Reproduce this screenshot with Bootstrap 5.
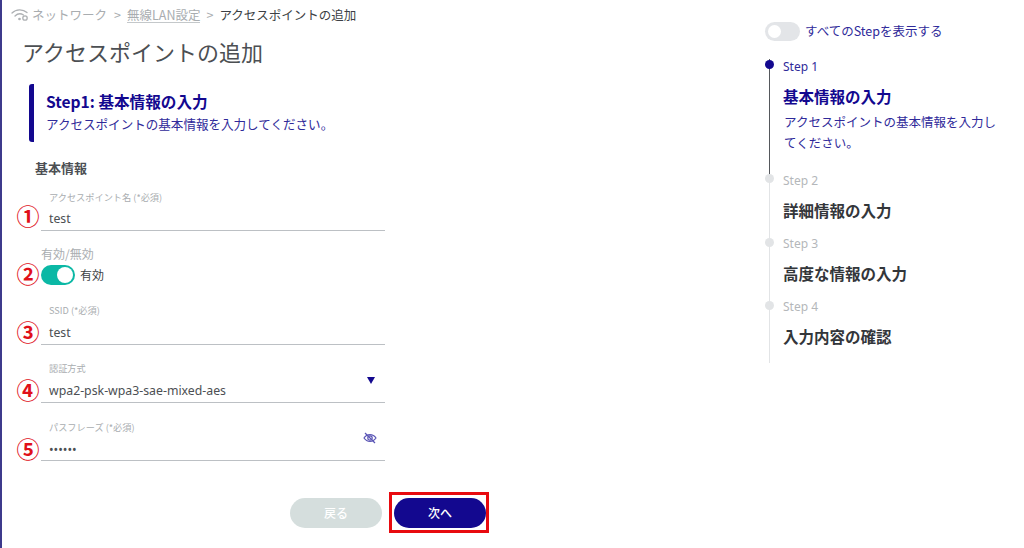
<!DOCTYPE html>
<html lang="ja">
<head>
<meta charset="utf-8">
<title>アクセスポイントの追加</title>
<link href="https://cdn.jsdelivr.net/npm/bootstrap@5.3.0/dist/css/bootstrap.min.css" rel="stylesheet">
<style>
html,body{height:100%}
body{font-family:"Noto Sans CJK JP","Noto Sans",sans-serif;color:#3c3f44;background:#fff;overflow:hidden}
.page-shell{height:548px;border-left:2px solid #3d3a8c;position:relative}
.main-col{width:763px;flex:none}
.crumbs{height:30px;padding-left:9px;font-size:12.5px;color:#a9adb0;gap:6px}
.crumbs svg{margin-right:-3px}
.crumb-first{margin-right:1px}
.crumb-link{border-bottom:1px solid #c4c8ca;line-height:15px}
.crumb-here{color:#3c3f44}
.page-heading{font-size:22px;font-weight:400;color:#4c4f53;margin:6px 0 0 20px;line-height:30px}
.step-banner{margin:18px 0 0 27px;border-left:5px solid #13088f;border-radius:3px;height:58px;padding:0 0 1px 12px}
.step-banner h2{font-size:15.6px;font-weight:700;color:#13088f;margin:0 0 1px;line-height:22px}
.step-banner p{font-size:12.55px;color:#2f2a9a;margin:0;line-height:22px}
.sec-title{font-size:13px;font-weight:700;color:#4c4f53;margin:16px 0 0 33px;line-height:20px}
.field-row{position:relative;margin-left:39px;width:344px;border-bottom:1px solid #bcc0c4}
.fld-name{margin-top:13px}
.fld-ssid{margin-top:18px}
.fld-auth{margin-top:17px}
.fld-pass{margin-top:18px}
.fld-label{font-size:9.2px;color:#a9adb0;line-height:12px;padding-left:8px}
.fld-value{font-size:12.3px;color:#4c4f53;padding:7px 0 1px 8px;line-height:20px;font-family:"Noto Sans","Noto Sans CJK JP",sans-serif}
.fld-name .fld-value{padding-top:6px}
.fld-pass .fld-value{padding-bottom:0}
.mark-num{position:absolute;left:-26px;width:26px;height:26px;color:#e0101a;font-size:23px;line-height:26px;text-align:center;font-weight:700}
.fld-name .mark-num{top:11px}
.fld-ssid .mark-num,.fld-auth .mark-num,.fld-pass .mark-num{top:14px}
.toggle-label{font-size:12px;color:#a9adb0;margin:14px 0 0 39px;line-height:18px}
.toggle-row{margin:1px 0 0 39px;position:relative;height:22px;gap:5px;font-size:12px;color:#3c3f44}
.toggle-row .mark-num{top:-4px}
.switch-on{width:34px;height:20px;border-radius:10px;background:#0bb8a5;position:relative}
.switch-on::after{content:"";position:absolute;right:2px;top:2px;width:16px;height:16px;border-radius:50%;background:#fff}
.switch-off{width:35px;height:19px;border-radius:10px;background:#e3e5e8;position:relative}
.switch-off::after{content:"";position:absolute;left:3px;top:3px;width:13px;height:13px;border-radius:50%;background:#fff}
.field-ico{position:absolute}
.ico-caret{top:15px;right:10px}
.ico-eye{top:11px;right:8px}
.btn-back,.btn-next{width:92px;height:30px;border-radius:15px;border:0;font-size:12px;padding:0;font-weight:500}
.btn-back,.btn-back:disabled{background:#d5dedd;color:#fff;opacity:1}
.btn-next,.btn-next:hover{background:#13088f;color:#fff}
.next-frame{border:3px solid #e80a0f;padding:3px 0 2px 2px;width:100px;height:41px;margin-left:7px}
.foot-row{margin-left:288px;margin-top:31px}
.side-col{width:259px;flex:none}
.side-toggle{margin:21px 0 0 0;gap:5px;font-size:12.5px;color:#2f2a9a;height:21px}
.stepper{margin-top:17px;margin-left:4px;position:relative;border-left:1px solid #e2e4e6;height:304px;padding-left:13px}
.stepper-progress{position:absolute;left:-1px;top:0;width:1px;height:118px;background:#55585c}
.step-dot{position:absolute;left:-5px;width:9px;height:9px;border-radius:50%;background:#e2e4e6}
.step-dot.on{background:#13088f}
.dot-a{top:1px}.dot-b{top:115px}.dot-c{top:179px}.dot-d{top:242px}
.step-unit{height:63px}
.step-unit.open{height:114px}
.step-no{font-size:12px;color:#b4b7ba;line-height:16px;font-family:"Noto Sans",sans-serif}
.step-name{font-size:15.5px;font-weight:700;color:#33363a;line-height:20px;margin-top:11px}
.open .step-no{color:#2f2a9a}
.open .step-name{color:#13088f}
.step-text{font-size:12.5px;color:#2f2a9a;line-height:21px;margin:5px 0 0 1px;width:218px}
</style>
</head>
<body>
<div class="page-shell d-flex">
  <div class="main-col">
    <div class="crumbs d-flex align-items-center">
      <svg width="18" height="14" viewBox="0 0 18 14" fill="none" stroke="#aeb1b4" stroke-width="1.3" stroke-linecap="round"><path d="M1 5C5 .8 12 .8 16 4.500"/><path d="M4 8c2.500-2.400 6-2.600 8.500-1"/><circle cx="8.500" cy="11" r=".7" fill="#aeb1b4"/><circle cx="14" cy="10" r="2.200"/></svg>
      <span class="crumb-first">ネットワーク</span><span>&gt;</span><span class="crumb-link">無線LAN設定</span><span>&gt;</span><span class="crumb-here">アクセスポイントの追加</span>
    </div>
    <h1 class="page-heading">アクセスポイントの追加</h1>
    <div class="step-banner d-flex flex-column justify-content-center">
      <h2>Step1: 基本情報の入力</h2>
      <p>アクセスポイントの基本情報を入力してください。</p>
    </div>
    <div class="sec-title">基本情報</div>

    <div class="field-row fld-name"><span class="mark-num">①</span><div class="fld-label">アクセスポイント名 (*必須)</div><div class="fld-value">test</div></div>

    <div class="toggle-label">有効/無効</div>
    <div class="toggle-row d-flex align-items-center"><span class="mark-num">②</span><span class="switch-on"></span><span>有効</span></div>

    <div class="field-row fld-ssid"><span class="mark-num">③</span><div class="fld-label">SSID (*必須)</div><div class="fld-value">test</div></div>

    <div class="field-row fld-auth"><span class="mark-num">④</span><div class="fld-label">認証方式</div><div class="fld-value">wpa2-psk-wpa3-sae-mixed-aes</div>
      <svg class="field-ico ico-caret" width="8" height="7" viewBox="0 0 8 7"><path d="M0 0h8L4 7z" fill="#13088f"/></svg></div>

    <div class="field-row fld-pass"><span class="mark-num">⑤</span><div class="fld-label">パスフレーズ (*必須)</div><div class="fld-value">••••••</div>
      <svg class="field-ico ico-eye" width="14" height="12" viewBox="0 0 14 12" fill="none" stroke="#5a55b5" stroke-width="1.2"><path d="M1 6c3-4.500 9-4.500 12 0-3 4.500-9 4.500-12 0z"/><circle cx="7" cy="6" r="2.200"/><path d="M2 1l10 10"/></svg></div>

    <div class="foot-row d-flex align-items-center">
      <button class="btn btn-back" disabled>戻る</button>
      <div class="next-frame"><button class="btn btn-next">次へ</button></div>
    </div>
  </div>
  <div class="side-col">
    <div class="side-toggle d-flex align-items-center"><span class="switch-off"></span><span>すべてのStepを表示する</span></div>
    <div class="stepper">
      <div class="stepper-progress"></div>
      <span class="step-dot on dot-a"></span>
      <span class="step-dot dot-b"></span>
      <span class="step-dot dot-c"></span>
      <span class="step-dot dot-d"></span>
      <div class="step-unit open"><div class="step-no">Step 1</div><div class="step-name">基本情報の入力</div><div class="step-text">アクセスポイントの基本情報を入力してください。</div></div>
      <div class="step-unit"><div class="step-no">Step 2</div><div class="step-name">詳細情報の入力</div></div>
      <div class="step-unit"><div class="step-no">Step 3</div><div class="step-name">高度な情報の入力</div></div>
      <div class="step-unit"><div class="step-no">Step 4</div><div class="step-name">入力内容の確認</div></div>
    </div>
  </div>
</div>
</body>
</html>
